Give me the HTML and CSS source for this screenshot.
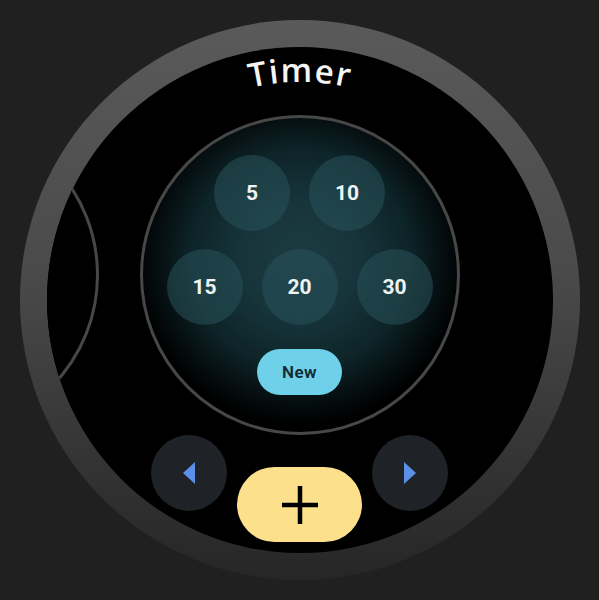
FILE: index.html
```html
<!DOCTYPE html>
<html>
<head>
<meta charset="utf-8">
<link rel="stylesheet" href="styles.css">
</head>
<body>
<div class="stage">
  <div class="bezel">
    <div class="face">
      <svg class="title" width="506" height="62" viewBox="0 0 506 62">
        <defs>
          <path id="arc" d="M 66.8 136.5 A 215 215 0 0 1 439.2 136.5"/>
        </defs>
        <text class="title-text"><textPath href="#arc" startOffset="50%" text-anchor="middle">Timer</textPath></text>
      </svg>
      <div class="track">
        <div class="page ghost"></div>
        <div class="page picker">
          <div class="row">
            <div class="chip">5</div>
            <div class="chip">10</div>
          </div>
          <div class="row">
            <div class="chip">15</div>
            <div class="chip">20</div>
            <div class="chip">30</div>
          </div>
          <div class="new">New</div>
        </div>
      </div>
      <div class="nav">
        <div class="navbtn">
          <svg width="12" height="22" viewBox="0 0 12 22"><polygon points="12,0 12,22 0,11" class="arrow"/></svg>
        </div>
        <div class="add">
          <svg width="36" height="38" viewBox="0 0 36 38"><rect x="0" y="16.75" width="36" height="4.5" class="plus"/><rect x="15.75" y="0" width="4.5" height="38" class="plus"/></svg>
        </div>
        <div class="navbtn">
          <svg width="12" height="22" viewBox="0 0 12 22"><polygon points="0,0 0,22 12,11" class="arrow"/></svg>
        </div>
      </div>
    </div>
  </div>
</div>
</body>
</html>
```

FILE: styles.css
```css
html, body {
  margin: 0;
  padding: 0;
  background: #202020;
}
.stage {
  width: 599px;
  height: 600px;
  display: flex;
  align-items: center;
  justify-content: center;
  font-family: Roboto, "Open Sans", sans-serif;
}
.bezel {
  width: 560px;
  height: 560px;
  border-radius: 50%;
  background: linear-gradient(180deg, #5a5a5a 0%, #4a4a4a 45%, #333333 80%, #262626 100%);
  display: flex;
  align-items: center;
  justify-content: center;
}
.face {
  width: 506px;
  height: 506px;
  border-radius: 50%;
  background: #000;
  overflow: hidden;
  display: flex;
  flex-direction: column;
  align-items: center;
}
.title {
  display: block;
  flex: none;
  margin-top: 6px;
}
.title-text {
  fill: #f4f4f4;
  font-family: "Open Sans", sans-serif;
  font-size: 33px;
  font-weight: 600;
  letter-spacing: 1.5px;
}
.track {
  display: flex;
  gap: 41px;
  align-self: flex-start;
  margin-left: -268px;
  flex: none;
}
.page {
  width: 320px;
  height: 320px;
  box-sizing: border-box;
  border-radius: 50%;
  border: 3px solid #474747;
  flex: none;
}
.ghost {
  background: #000;
}
.picker {
  background: radial-gradient(circle at 50% 45%, #1c3b41 0%, #17343b 25%, #0d2428 47%, #040b0d 63%, #000 71%);
  display: flex;
  flex-direction: column;
  align-items: center;
  padding-top: 37px;
  gap: 18px;
}
.row {
  display: flex;
  gap: 19px;
}
.chip {
  width: 76px;
  height: 76px;
  border-radius: 50%;
  background: rgba(40, 82, 90, 0.55);
  color: #eef4f4;
  font-size: 21px;
  font-weight: 700;
  display: flex;
  align-items: center;
  justify-content: center;
}
.new {
  margin-top: 6px;
  width: 85px;
  height: 46px;
  border-radius: 23px;
  background: #6ed1e9;
  color: #132a33;
  font-size: 17px;
  font-weight: 600;
  letter-spacing: 0.5px;
  display: flex;
  align-items: center;
  justify-content: center;
}
.nav {
  display: flex;
  align-items: flex-start;
  gap: 10px;
  flex: none;
}
.navbtn {
  width: 76px;
  height: 76px;
  border-radius: 50%;
  background: #1f2328;
  display: flex;
  align-items: center;
  justify-content: center;
}
.arrow {
  fill: #5b8fe8;
}
.add {
  margin-top: 32px;
  width: 125px;
  height: 75px;
  border-radius: 38px;
  background: #fde08b;
  display: flex;
  align-items: center;
  justify-content: center;
}
.plus {
  fill: #000;
}
```
